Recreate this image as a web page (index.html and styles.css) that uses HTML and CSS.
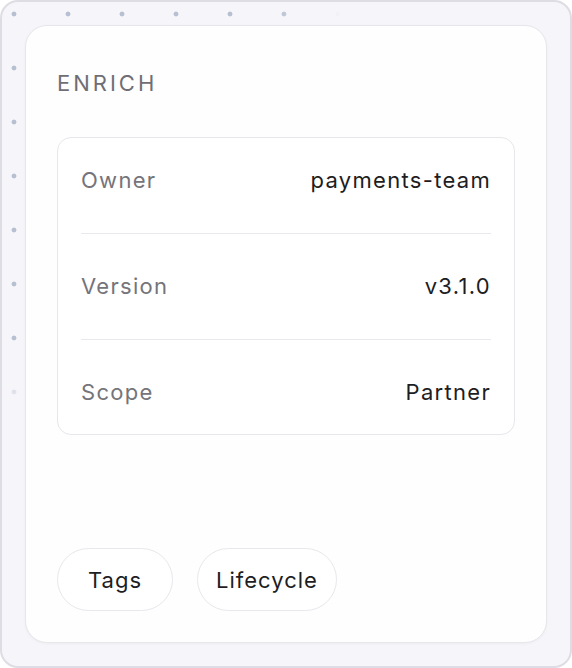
FILE: index.html
```html
<!DOCTYPE html>
<html lang="en">
<head>
<meta charset="utf-8">
<title>Enrich</title>
<link rel="stylesheet" href="styles.css">
</head>
<body>
<div class="frame">
  <section class="card">
    <h2 class="title">ENRICH</h2>
    <div class="info">
      <div class="row"><span class="label">Owner</span><span class="value">payments-team</span></div>
      <div class="divider"></div>
      <div class="row"><span class="label">Version</span><span class="value">v3.1.0</span></div>
      <div class="divider"></div>
      <div class="row"><span class="label">Scope</span><span class="value">Partner</span></div>
    </div>
    <div class="actions">
      <button class="pill">Tags</button>
      <button class="pill">Lifecycle</button>
    </div>
  </section>
</div>
</body>
</html>
```
FILE: styles.css
```css
html, body {
  margin: 0;
  padding: 0;
  background: #ffffff;
}
body {
  font-family: Inter, "Noto Sans", sans-serif;
}
.frame {
  box-sizing: border-box;
  width: 572px;
  height: 668px;
  border: 2px solid #dedde4;
  border-radius: 18px;
  background-color: #f6f5f9;
  background-image:
    radial-gradient(ellipse 340px 420px at 0 0, rgba(246,245,249,0) 80%, #f6f5f9 100%),
    radial-gradient(circle, #b7c0d2 0, #b7c0d2 2px, rgba(183,192,210,0) 2.8px);
  background-size: 100% 100%, 54px 54px;
  background-position: 0 0, -15px -15px;
  background-repeat: no-repeat, repeat;
  padding: 23px;
}
.card {
  box-sizing: border-box;
  height: 100%;
  background: #fefefe;
  border: 1px solid #e7e6eb;
  border-radius: 22px;
  padding: 31px 31px 31px;
  display: flex;
  flex-direction: column;
  box-shadow: 0 1px 3px rgba(30, 20, 60, 0.04);
}
.title {
  margin: 0;
  font-size: 22px;
  font-weight: 400;
  letter-spacing: 3px;
  color: #6f6e75;
  line-height: 52px;
}
.info {
  margin-top: 28px;
  border: 1px solid #e7e6eb;
  border-radius: 14px;
  padding: 0 23px;
  background: #fff;
}
.row {
  height: 84px;
  display: flex;
  align-items: center;
  justify-content: space-between;
  font-size: 22px;
  letter-spacing: 1.3px;
}
.label {
  color: #75747a;
}
.value {
  color: #1e1d22;
}
.divider {
  height: 1px;
  background: #e9e8ec;
  margin: 11px 0 10px;
}
.actions {
  margin-top: auto;
  display: flex;
  gap: 24px;
}
.pill {
  box-sizing: border-box;
  height: 63px;
  min-width: 116px;
  padding: 0 18px;
  border: 1px solid #e8e7ec;
  border-radius: 32px;
  background: #fff;
  font-family: Inter, "Noto Sans", sans-serif;
  font-size: 22px;
  letter-spacing: 1px;
  color: #1e1d22;
  cursor: pointer;
}
```
